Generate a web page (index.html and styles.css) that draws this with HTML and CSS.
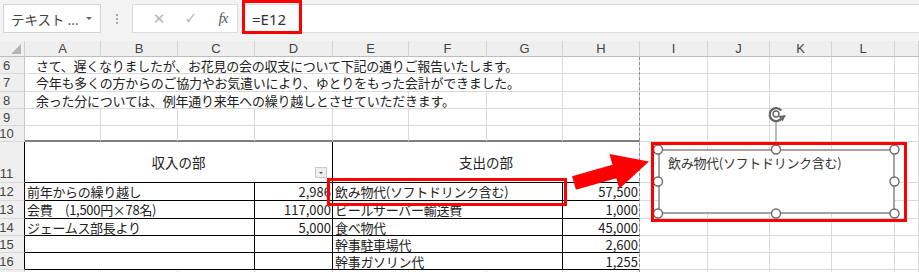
FILE: index.html
```html
<!DOCTYPE html>
<html lang="ja">
<head>
<meta charset="utf-8">
<link rel="stylesheet" href="styles.css">
</head>
<body>
<div class="toolbar">
  <div class="namebox"><span>テキスト ...</span><span class="dd"></span></div>
  <div class="sep"><i></i><i></i><i></i></div>
  <div class="btns">
    <span class="x">✕</span><span class="ok">✓</span><span class="fx">fx</span>
  </div>
  <div class="formula">=E12</div>
</div>
<div class="sheet">
  <div class="corner"><span class="tri"></span></div>
  <div class="h">A</div><div class="h">B</div><div class="h">C</div><div class="h">D</div><div class="h">E</div><div class="h">F</div><div class="h">G</div><div class="h">H</div><div class="h">I</div><div class="h">J</div><div class="h">K</div><div class="h">L</div><div class="h"></div>

  <div class="rh">6</div><div class="c t s7">さて、遅くなりましたが、お花見の会の収支について下記の通りご報告いたします。</div><div class="c"></div><div class="c"></div><div class="c"></div><div class="c"></div><div class="c"></div><div class="c"></div>

  <div class="rh">7</div><div class="c t s7">今年も多くの方からのご協力やお気遣いにより、ゆとりをもった会計ができました。</div><div class="c"></div><div class="c"></div><div class="c"></div><div class="c"></div><div class="c"></div><div class="c"></div>

  <div class="rh">8</div><div class="c t s5">余った分については、例年通り来年への繰り越しとさせていただきます。</div><div class="c"></div><div class="c"></div><div class="c"></div><div class="c"></div><div class="c"></div><div class="c"></div><div class="c"></div><div class="c"></div>

  <div class="rh">9</div><div class="c"></div><div class="c"></div><div class="c"></div><div class="c"></div><div class="c"></div><div class="c"></div><div class="c"></div><div class="c"></div><div class="c"></div><div class="c"></div><div class="c"></div><div class="c"></div><div class="c"></div>

  <div class="rh">10</div><div class="c tb"></div><div class="c tb"></div><div class="c tb"></div><div class="c tb"></div><div class="c tb"></div><div class="c tb"></div><div class="c tb"></div><div class="c tb"></div><div class="c"></div><div class="c"></div><div class="c"></div><div class="c"></div><div class="c"></div>

  <div class="rh rb bot">11</div><div class="c hd b s4">収入の部<span class="filter"></span></div><div class="c hd bb s4">支出の部</div><div class="c"></div><div class="c"></div><div class="c"></div><div class="c"></div><div class="c"></div>

  <div class="rh rb">12</div><div class="c tx b s3">前年からの繰り越し</div><div class="c n b">2,986</div><div class="c tx b s3">飲み物代(ソフトドリンク含む)</div><div class="c n bb">57,500</div><div class="c"></div><div class="c"></div><div class="c"></div><div class="c"></div><div class="c"></div>

  <div class="rh rb">13</div><div class="c tx b s3">会費　(1,500円×78名)</div><div class="c n b">117,000</div><div class="c tx b s3">ビールサーバー輸送費</div><div class="c n bb">1,000</div><div class="c"></div><div class="c"></div><div class="c"></div><div class="c"></div><div class="c"></div>

  <div class="rh rb">14</div><div class="c tx b s3">ジェームス部長より</div><div class="c n b">5,000</div><div class="c tx b s3">食べ物代</div><div class="c n bb">45,000</div><div class="c"></div><div class="c"></div><div class="c"></div><div class="c"></div><div class="c"></div>

  <div class="rh rb">15</div><div class="c tx b s3"></div><div class="c n b"></div><div class="c tx b s3">幹事駐車場代</div><div class="c n bb">2,600</div><div class="c"></div><div class="c"></div><div class="c"></div><div class="c"></div><div class="c"></div>

  <div class="rh rb">16</div><div class="c tx b s3"></div><div class="c n b"></div><div class="c tx b s3">幹事ガソリン代</div><div class="c n bb">1,255</div><div class="c"></div><div class="c"></div><div class="c"></div><div class="c"></div><div class="c"></div>

  <div class="rh last"></div><div class="c last"></div><div class="c last"></div><div class="c last"></div><div class="c last"></div><div class="c last"></div><div class="c last"></div><div class="c last"></div><div class="c last"></div><div class="c last"></div><div class="c last"></div><div class="c last"></div><div class="c last"></div><div class="c last"></div>
</div>

<div class="pagebreak"></div>
<div class="textbox">飲み物代(ソフトドリンク含む)</div>

<svg class="overlay" width="919" height="272" viewBox="0 0 919 272" xmlns="http://www.w3.org/2000/svg">
  <g transform="translate(574 183) rotate(-16)">
    <polygon points="0,-7 42,-7 42,-18 78,0 42,18 42,7 0,7" fill="#ff0000"/>
  </g>
  <line x1="776" y1="122" x2="776" y2="149" stroke="#a6a6a6" stroke-width="1.5"/>
  <path d="M781.2 110.5 A6.5 6.5 0 1 0 782 117.5" fill="none" stroke="#666" stroke-width="2.2"/>
  <circle cx="776" cy="114" r="3" fill="none" stroke="#666" stroke-width="1.4"/>
  <polygon points="778.5,116 786,115 782.5,121.5" fill="#666"/>
  <g fill="#fff" stroke="#6b6b6b" stroke-width="1.4">
    <circle cx="658" cy="149.5" r="4.5"/>
    <circle cx="776" cy="149.5" r="4.5"/>
    <circle cx="894.5" cy="149.5" r="4.5"/>
    <circle cx="658" cy="181.5" r="4.5"/>
    <circle cx="894.5" cy="181.5" r="4.5"/>
    <circle cx="658" cy="213.5" r="4.5"/>
    <circle cx="776" cy="213.5" r="4.5"/>
    <circle cx="894.5" cy="213.5" r="4.5"/>
  </g>
</svg>

<div class="redbox rb1"></div>
<div class="redbox rb2"></div>
<div class="redbox rb3"></div>
</body>
</html>
```

FILE: styles.css
```css
html, body {
  margin: 0;
  padding: 0;
}
body {
  width: 919px;
  height: 272px;
  overflow: hidden;
  position: relative;
  background: #ffffff;
  font-family: "Noto Sans CJK JP", "Noto Sans", sans-serif;
  color: #222;
}

/* ---------- formula bar ---------- */
.toolbar {
  height: 41px;
  box-sizing: border-box;
  background: #f3f3f3;
  display: flex;
  align-items: flex-start;
  padding-top: 4px;
}
.namebox {
  margin-left: 3px;
  width: 98px;
  height: 29px;
  box-sizing: border-box;
  background: #fff;
  border: 1px solid #d4d4d4;
  display: flex;
  align-items: center;
  justify-content: space-between;
  padding: 0 7px 0 7px;
  font-size: 13.5px;
  color: #444;
}
.dd {
  width: 0;
  height: 0;
  border-left: 3px solid transparent;
  border-right: 3px solid transparent;
  border-top: 3px solid #666;
  margin-right: 1px;
}
.sep {
  width: 31px;
  height: 29px;
  display: flex;
  flex-direction: column;
  align-items: center;
  justify-content: center;
  gap: 2px;
}
.sep i {
  display: block;
  width: 2px;
  height: 2px;
  background: #a8a8a8;
}
.btns {
  width: 106px;
  height: 29px;
  box-sizing: border-box;
  background: #fff;
  border: 1px solid #dcdcdc;
  display: flex;
  align-items: center;
  padding-left: 12px;
}
.btns span {
  display: inline-block;
  text-align: center;
}
.btns .x {
  width: 28px;
  font-family: "DejaVu Sans", sans-serif;
  font-size: 15px;
  color: #b8b8b8;
}
.btns .ok {
  width: 36px;
  font-family: "DejaVu Sans", sans-serif;
  font-size: 16px;
  color: #b8b8b8;
}
.btns .fx {
  width: 28px;
  font-family: "Liberation Serif", serif;
  font-style: italic;
  font-size: 15px;
  color: #555;
  letter-spacing: -1px;
}
.formula {
  margin-left: 4px;
  flex: 1;
  height: 29px;
  box-sizing: border-box;
  background: #fff;
  border: 1px solid #dcdcdc;
  border-right: none;
  padding-left: 9px;
  display: flex;
  align-items: center;
  font-family: "Noto Sans", sans-serif;
  font-size: 15px;
  color: #333;
}

/* ---------- sheet grid ---------- */
.sheet {
  display: grid;
  grid-template-columns: 25px 76px 77px 77px 78px 76px 78px 76px 77px 68px 62px 62px 63px 24px;
  grid-template-rows: 16px 17px 18px 17px 17px 16px 41px 18px 18px 17px 17px 17px 2px;
}
.corner, .h, .rh {
  background: #efefef;
  box-sizing: border-box;
  color: #444;
}
.corner {
  position: relative;
  border-right: 1px solid #cfcfcf;
  border-bottom: 1px solid #bdbdbd;
}
.tri {
  position: absolute;
  right: 3px;
  bottom: 2px;
  width: 0;
  height: 0;
  border-left: 10px solid transparent;
  border-bottom: 10px solid #b5b5b5;
}
.h {
  border-right: 1px solid #d4d4d4;
  border-bottom: 1px solid #bdbdbd;
  font-family: "Liberation Sans", sans-serif;
  font-size: 13px;
  line-height: 15px;
  text-align: center;
}
.rh {
  border-right: 1px solid #c8c8c8;
  border-bottom: 1px solid #d9d9d9;
  font-family: "Liberation Sans", sans-serif;
  font-size: 13px;
  line-height: 15px;
  display: flex;
  align-items: center;
  justify-content: center;
  padding-right: 11px;
}
.rh.bot {
  align-items: flex-end;
  padding-bottom: 1px;
}
.rh.rb {
  border-right-color: #000;
}
.c {
  box-sizing: border-box;
  border-right: 1px solid #dadada;
  border-bottom: 1px solid #dadada;
  font-size: 13px;
  line-height: 15px;
  white-space: nowrap;
  display: flex;
  align-items: center;
  min-width: 0;
}
.last {
  border-bottom: none;
}
.s3 { grid-column: span 3; }
.s4 { grid-column: span 4; }
.s5 { grid-column: span 5; }
.s7 { grid-column: span 7; }
.t {
  padding-left: 11px;
  letter-spacing: -0.25px;
}
.tb {
  border-bottom: 2px solid #7f7f7f;
}
.hd {
  justify-content: center;
  position: relative;
  font-size: 13.5px;
}
.b {
  border-right-color: #000;
  border-bottom-color: #000;
}
.bb {
  border-bottom-color: #000;
}
.tx {
  padding-left: 2px;
  letter-spacing: -0.3px;
}
.n {
  justify-content: flex-end;
  padding-right: 1px;
  font-size: 13px;
}
.filter {
  position: absolute;
  right: 5px;
  bottom: 4px;
  width: 12px;
  height: 11px;
  box-sizing: border-box;
  background: #f0f0f0;
  border: 1px solid #c9c9c9;
}
.filter::after {
  content: "";
  position: absolute;
  left: 3px;
  top: 4px;
  border-left: 2.5px solid transparent;
  border-right: 2.5px solid transparent;
  border-top: 2.5px solid #555;
}

/* ---------- overlays ---------- */
.pagebreak {
  position: absolute;
  left: 639px;
  top: 57px;
  height: 215px;
  border-left: 1px dashed #8c8c8c;
}
.textbox {
  position: absolute;
  left: 658px;
  top: 149px;
  width: 237px;
  height: 65px;
  box-sizing: border-box;
  border: 2px solid #a3a3a3;
  background: #fff;
  padding: 3px 0 0 8px;
  font-size: 13px;
  line-height: 18px;
  color: #333;
  letter-spacing: -0.3px;
}
.overlay {
  position: absolute;
  left: 0;
  top: 0;
  pointer-events: none;
}
.redbox {
  position: absolute;
  box-sizing: border-box;
  border: 3px solid #ff0000;
}
.rb1 {
  left: 242px;
  top: 0;
  width: 60px;
  height: 34px;
}
.rb2 {
  left: 327px;
  top: 178px;
  width: 240px;
  height: 28px;
}
.rb3 {
  left: 651px;
  top: 142px;
  width: 256px;
  height: 80px;
}
```
